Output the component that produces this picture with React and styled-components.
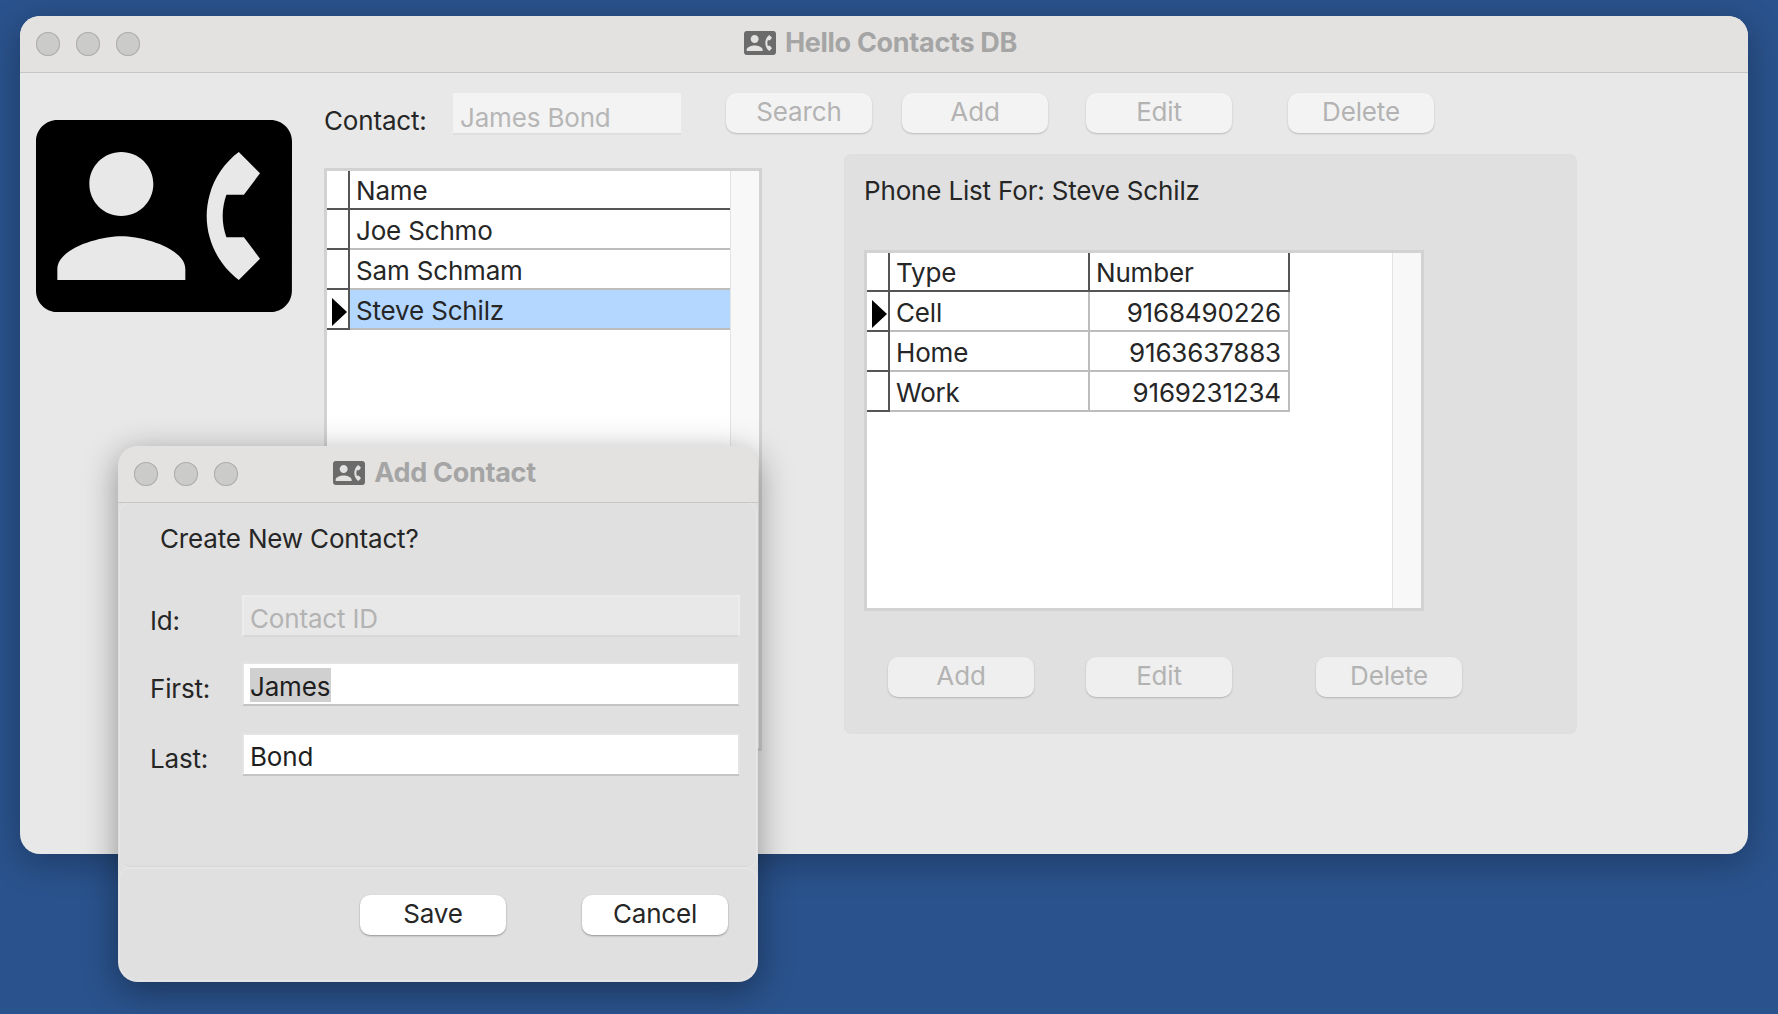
import React from "react";
import styled, { createGlobalStyle } from "styled-components";

const Global = createGlobalStyle`
  html, body { margin: 0; padding: 0; height: 100%; background: #2a528c; }
  body { font-family: Inter, "Liberation Sans", sans-serif; font-size: 26px; letter-spacing: -0.17px; color: #262626; }
  #root { height: 100%; }
`;

const Desktop = styled.div`
  position: relative;
  width: 1778px;
  height: 1014px;
  overflow: hidden;
  background: #2a528c;
`;

const Win = styled.div`
  position: absolute;
  left: ${(p) => p.$x}px;
  top: ${(p) => p.$y}px;
  width: ${(p) => p.$w}px;
  height: ${(p) => p.$h}px;
  display: flex;
  flex-direction: column;
  background: ${(p) => p.$bg};
  border-radius: 20px;
  box-shadow: 0 8px 34px rgba(0, 0, 0, ${(p) => p.$shadow});
`;

const TitleBar = styled.div`
  position: relative;
  flex: none;
  box-sizing: border-box;
  height: 57px;
  display: flex;
  align-items: center;
  justify-content: center;
  gap: 9px;
  padding: 0 7px 3px 0;
  background: #e3e2e0;
  border-bottom: 1px solid #c6c6c6;
  border-radius: 20px 20px 0 0;
  color: #a5a5a5;
  font-weight: 700;
  font-size: 27px;
  letter-spacing: -0.3px;
`;

const Lights = styled.div`
  position: absolute;
  left: 16px;
  top: 16px;
  display: flex;
  gap: 16px;
`;

const Light = styled.span`
  width: 24px;
  height: 24px;
  border-radius: 50%;
  background: #cbcbc9;
  box-shadow: inset 0 0 0 1px #acacaa;
`;

const TitleIcon = styled.svg`
  width: 32px;
  height: 24px;
  fill: #6b6b6b;
  flex: none;
`;

const Avatar = styled.svg`
  width: 256px;
  height: 192px;
  margin-top: 47px;
  flex: none;
  fill: #000;
`;

const Body = styled.div`
  display: flex;
  gap: 32px;
  padding: 0 0 0 16px;
  flex: 1;
`;

const Main = styled.div`
  padding-top: 20px;
  flex: 1;
`;

const Toolbar = styled.div`
  display: flex;
  align-items: flex-start;
  height: 42px;
`;

const ContactLabel = styled.label`
  width: 129px;
  flex: none;
  line-height: 30px;
  padding-top: 13px;
`;

const DisabledInput = styled.div`
  width: 228px;
  height: 42px;
  box-sizing: border-box;
  padding-left: 7px;
  line-height: 50px;
  background: #f3f3f3;
  border-bottom: 2px solid #dedede;
  color: #b6b6b6;
`;

const Button = styled.button`
  width: 146px;
  height: 40px;
  flex: none;
  padding: 0 0 3px;
  margin-left: ${(p) => p.$ml || 0}px;
  border: 0;
  border-radius: 10px;
  font: inherit;
  letter-spacing: inherit;
  background: ${(p) => (p.$active ? "#fff" : p.$soft ? "#efefef" : "#f3f3f3")};
  color: ${(p) => (p.$active ? "#262626" : "#b3b3b3")};
  box-shadow: 0 1px 2px rgba(0, 0, 0, ${(p) => (p.$active ? 0.35 : 0.2)});
`;

const Content = styled.div`
  display: flex;
  align-items: flex-start;
  margin-top: 19px;
`;

const TableFrame = styled.div`
  display: flex;
  flex: none;
  box-sizing: border-box;
  width: ${(p) => p.$w}px;
  height: ${(p) => p.$h}px;
  margin-top: ${(p) => p.$mt || 0}px;
  border: 3px solid #d2d2d2;
  background: #fff;
`;

const GridArea = styled.div`
  flex: 1;
  min-width: 0;
`;

const ScrollTrack = styled.div`
  flex: none;
  width: 29px;
  box-sizing: border-box;
  background: #f8f8f8;
  border-left: 1px solid #e3e3e3;
`;

const Row = styled.div`
  display: grid;
  grid-template-columns: ${(p) => p.$cols};
  height: ${(p) => (p.$head ? 39 : 40)}px;
  width: ${(p) => p.$w || "auto"};
`;

const RowHead = styled.div`
  position: relative;
  box-sizing: border-box;
  border-right: 2px solid #555;
  border-bottom: 2px solid #555;
`;

const Arrow = styled.span`
  position: absolute;
  left: 5px;
  top: 8px;
  width: 0;
  height: 0;
  border-style: solid;
  border-width: 14px 0 14px 15px;
  border-color: transparent transparent transparent #000;
`;

const Cell = styled.div`
  box-sizing: border-box;
  padding: ${(p) => (p.$head ? 2 : 3)}px ${(p) => (p.$right ? 7 : 6)}px 0 6px;
  line-height: 35px;
  white-space: nowrap;
  color: #262626;
  text-align: ${(p) => (p.$right ? "right" : "left")};
  background: ${(p) => (p.$sel ? "#b3d7ff" : "#fff")};
  border-bottom: 2px solid ${(p) => (p.$head ? "#555" : "#bdbdbd")};
  border-right: ${(p) => (p.$edge ? `2px solid ${p.$head ? "#555" : "#bdbdbd"}` : "0")};
`;

const Panel = styled.section`
  flex: none;
  box-sizing: border-box;
  width: 733px;
  height: 580px;
  margin-left: 82px;
  padding: 22px 20px 0;
  background: #e0e0e0;
  border-radius: 8px;
  box-shadow: inset 0 0 0 1px #dedede;
`;

const PanelTitle = styled.div`
  height: 74px;
  line-height: 30px;
`;

const PanelButtons = styled.div`
  display: flex;
  padding-left: 24px;
  margin-top: 46px;
`;

const Section = styled.div`
  margin: 0 2px;
  box-sizing: border-box;
  height: 364px;
  flex: none;
  background: #e0e0e0;
  border-radius: 10px;
  border-bottom: 1px solid #d6d6d6;
  box-shadow: 0 0 0 1px #e6e6e6;
`;

const Heading = styled.div`
  padding: 21px 0 0 40px;
  line-height: 30px;
  height: 31px;
`;

const Form = styled.div`
  display: grid;
  grid-template-columns: 92px 498px;
  padding: 40px 0 0 30px;
  row-gap: 25px;
`;

const FormLabel = styled.label`
  line-height: 30px;
  padding-top: ${(p) => p.$pt}px;
`;

const Field = styled.div`
  box-sizing: border-box;
  height: ${(p) => p.$h}px;
  margin-top: ${(p) => p.$mt || 0}px;
  padding-left: 6px;
  line-height: ${(p) => p.$lh}px;
  background: ${(p) => (p.$disabled ? "#e8e8e8" : "#fff")};
  color: ${(p) => (p.$disabled ? "#b3b3b3" : "#1e1e1e")};
  border: 2px solid ${(p) => (p.$disabled ? "#ececec" : "#e4e4e4")};
  border-bottom-color: ${(p) => (p.$disabled ? "#d8d8d8" : "#c4c4c4")};
`;

const Selected = styled.span`
  display: inline-block;
  height: 34px;
  line-height: 38px;
  background: #d0d0d0;
  padding-right: 1px;
  vertical-align: top;
  margin-top: 4px;
`;

const Footer = styled.div`
  flex: 1;
  display: flex;
  margin: 2px 2px 2px;
  padding: 26px 0 0 240px;
  border-radius: 10px 10px 18px 18px;
  box-shadow: 0 0 0 1px #e6e6e6;
`;

const Glyph = () => (
  <path d="M22 3H2C.9 3 0 3.9 0 5v14c0 1.1.9 2 2 2h20c1.1 0 1.99-.9 1.99-2L24 5c0-1.1-.9-2-2-2zM8 6c1.66 0 3 1.34 3 3s-1.34 3-3 3-3-1.34-3-3 1.34-3 3-3zm6 12H2v-1c0-2 4-3.1 6-3.1s6 1.1 6 3.1v1zm3.85-4h1.64L21 16l-1.99 1.99c-1.31-.98-2.28-2.38-2.73-3.99-.18-.64-.28-1.31-.28-2s.1-1.36.28-2c.45-1.62 1.42-3.01 2.73-3.99L21 8l-1.51 2h-1.64c-.22.63-.35 1.3-.35 2s.13 1.37.35 2z" />
);

const contacts = ["Joe Schmo", "Sam Schmam", "Steve Schilz"];
const phones = [
  ["Cell", "9168490226"],
  ["Home", "9163637883"],
  ["Work", "9169231234"],
];

export default function App() {
  return (
    <Desktop>
      <Global />
      <Win $x={20} $y={16} $w={1728} $h={838} $bg="#e8e8e8" $shadow={0.28}>
        <TitleBar>
          <Lights>
            <Light />
            <Light />
            <Light />
          </Lights>
          <TitleIcon viewBox="0 3 24 18" preserveAspectRatio="none">
            <Glyph />
          </TitleIcon>
          Hello Contacts DB
        </TitleBar>
        <Body>
          <Avatar viewBox="0 3 24 18" preserveAspectRatio="none">
            <Glyph />
          </Avatar>
          <Main>
            <Toolbar>
              <ContactLabel>Contact:</ContactLabel>
              <DisabledInput>James Bond</DisabledInput>
              <Button $ml={45}>Search</Button>
              <Button $ml={30}>Add</Button>
              <Button $ml={38}>Edit</Button>
              <Button $ml={56}>Delete</Button>
            </Toolbar>
            <Content>
              <TableFrame $w={438} $h={583} $mt={14}>
                <GridArea>
                  <Row $head $cols="23px 1fr">
                    <RowHead />
                    <Cell $head>Name</Cell>
                  </Row>
                  {contacts.map((name, i) => (
                    <Row key={name} $cols="23px 1fr">
                      <RowHead>{i === 2 && <Arrow />}</RowHead>
                      <Cell $sel={i === 2}>{name}</Cell>
                    </Row>
                  ))}
                </GridArea>
                <ScrollTrack />
              </TableFrame>
              <Panel>
                <PanelTitle>Phone List For: Steve Schilz</PanelTitle>
                <TableFrame $w={560} $h={361}>
                  <GridArea>
                    <Row $head $cols="23px 200px 200px" $w="423px">
                      <RowHead />
                      <Cell $head $edge>Type</Cell>
                      <Cell $head $edge>Number</Cell>
                    </Row>
                    {phones.map(([type, number], i) => (
                      <Row key={type} $cols="23px 200px 200px" $w="423px">
                        <RowHead>{i === 0 && <Arrow />}</RowHead>
                        <Cell $edge>{type}</Cell>
                        <Cell $edge $right>{number}</Cell>
                      </Row>
                    ))}
                  </GridArea>
                  <ScrollTrack />
                </TableFrame>
                <PanelButtons>
                  <Button $soft>Add</Button>
                  <Button $soft $ml={52}>Edit</Button>
                  <Button $soft $ml={84}>Delete</Button>
                </PanelButtons>
              </Panel>
            </Content>
          </Main>
        </Body>
      </Win>

      <Win $x={118} $y={446} $w={640} $h={536} $bg="#e0e0e0" $shadow={0.38}>
        <TitleBar>
          <Lights>
            <Light />
            <Light />
            <Light />
          </Lights>
          <TitleIcon viewBox="0 3 24 18" preserveAspectRatio="none">
            <Glyph />
          </TitleIcon>
          Add Contact
        </TitleBar>
        <Section>
          <Heading>Create New Contact?</Heading>
          <Form>
            <FormLabel $pt={11}>Id:</FormLabel>
            <Field $h={42} $lh={44} $disabled>Contact ID</Field>
            <FormLabel $pt={12}>First:</FormLabel>
            <Field $h={44}><Selected>James</Selected></Field>
            <FormLabel $pt={13}>Last:</FormLabel>
            <Field $h={43} $mt={2} $lh={44}>Bond</Field>
          </Form>
        </Section>
        <Footer>
          <Button $active>Save</Button>
          <Button $active $ml={76}>Cancel</Button>
        </Footer>
      </Win>
    </Desktop>
  );
}
